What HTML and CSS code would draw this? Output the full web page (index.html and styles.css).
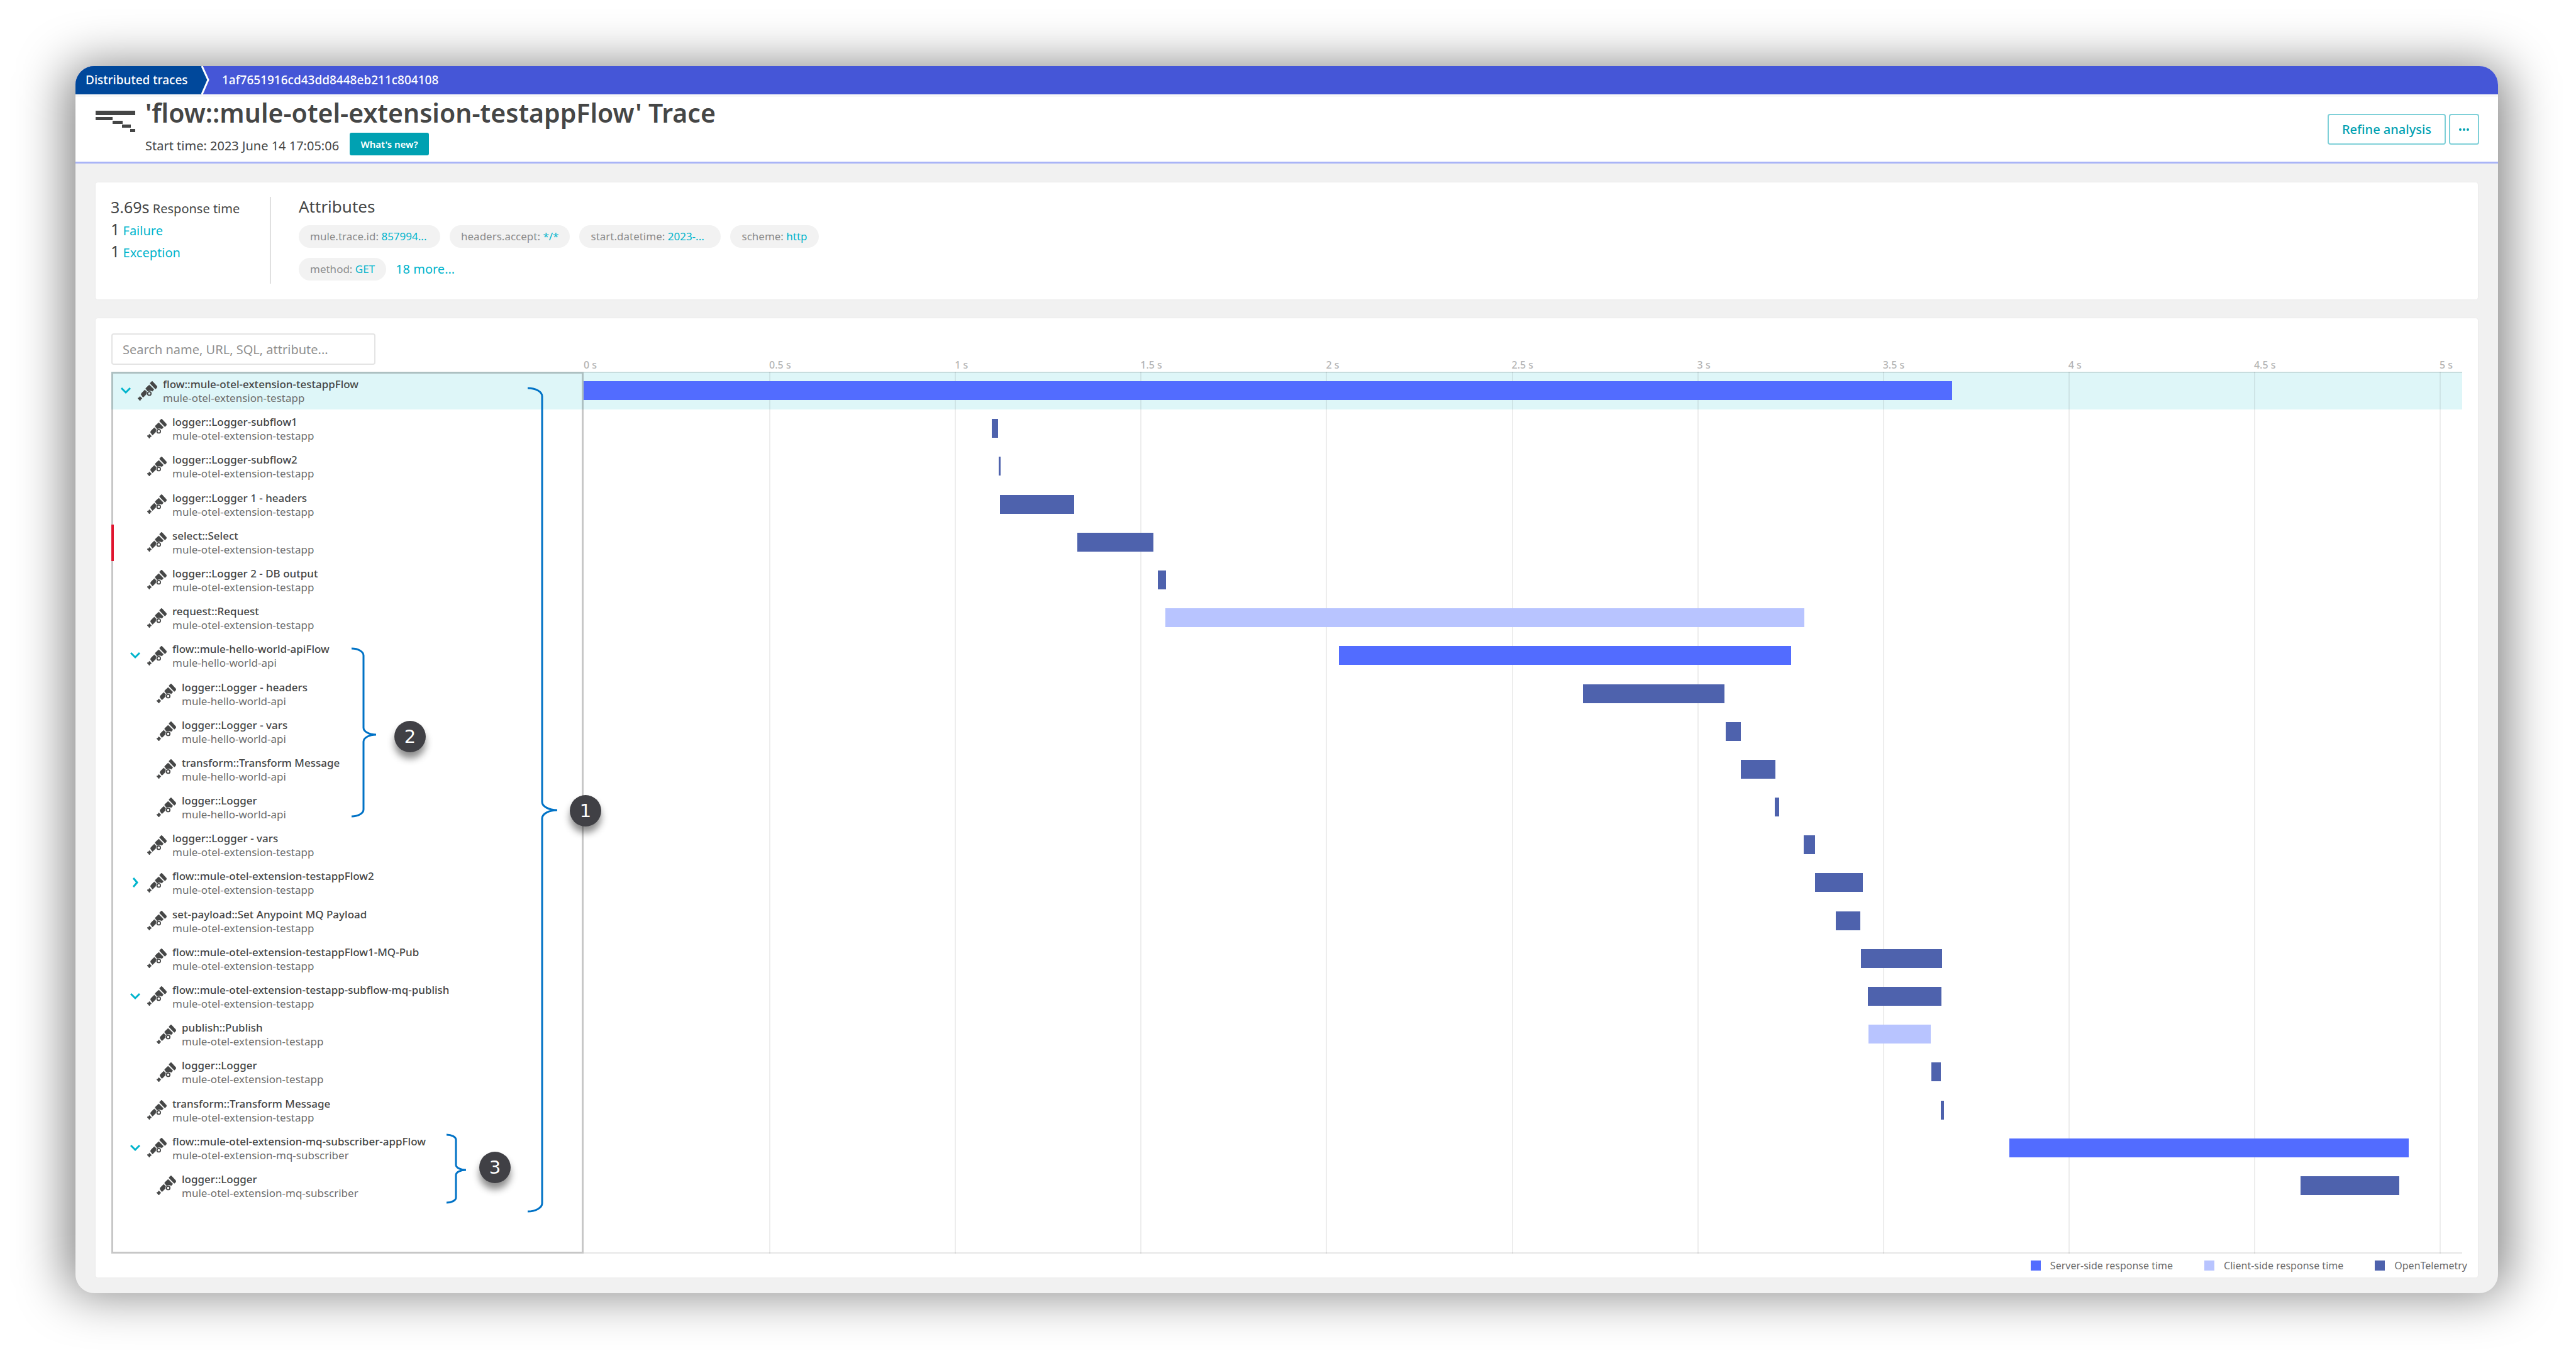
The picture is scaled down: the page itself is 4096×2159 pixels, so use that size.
FILE: index.html
```
<!DOCTYPE html>
<html lang="en">
<head>
<meta charset="utf-8">
<title>Distributed traces</title>
<link rel="stylesheet" href="styles.css">
</head>
<body>
<svg class="sprite" aria-hidden="true">
  <symbol id="telescope" viewBox="0 0 101 101">
    <g stroke="currentColor" stroke-width="2">
    <path d="M65 13 Q64 10 66 8 L72 2 Q74 0 77 2 L100 27 Q102 30 100 32 L94 39 Q92 41 90 39 Z"/>
    <path d="M42 40 Q41 37 43 35 L58 21 Q60 19 62 21 L83 42 Q84 45 81 47 L76 52 Q71 49 66 49 Q58 48 52 52 Z"/>
    <path d="M17 69 L20 62 L35 47 Q37 45 39 47 L47 55 Q44 61 45 67 L30 82 Q28 84 26 82 Z"/>
    <path d="M0 89 Q0 86 3 86 L7 86 L10 80 Q12 78 14 81 L21 88 Q23 91 20 92 L15 94 L14 99 Q12 102 10 100 L7 95 Z"/>
    </g>
    <circle cx="60" cy="64" r="9" fill="none" stroke="currentColor" stroke-width="6"/>
  </symbol>
  <symbol id="chevron-down" viewBox="0 0 16 16">
    <path d="M1 4 L8 11 L15 4" fill="none" stroke="#00b4cc" stroke-width="3"/>
  </symbol>
  <symbol id="chevron-right" viewBox="0 0 16 16">
    <path d="M5 1 L11 8 L5 15" fill="none" stroke="#00b4cc" stroke-width="3"/>
  </symbol>
</svg>

<div class="window">
  <nav class="topbar">
    <a class="crumb" href="#">Distributed traces</a>
    <svg class="crumb-arrow" viewBox="0 0 14 45" aria-hidden="true"><path d="M0 0 H1 L11 22 L1 45 H0 Z" fill="#00489b"/><path d="M1 0 L11 22 L1 45" fill="none" stroke="#fff" stroke-width="3"/></svg>
    <span class="crumb-id">1af7651916cd43dd8448eb211c804108</span>
  </nav>

  <header class="header">
    <svg class="trace-icon" viewBox="0 0 63 34" aria-hidden="true"><path d="M0 0h63v7H0zM0 10h27v5H0zM27 16h16v5H27zM42 22h14v5H42zM55 29h8v5h-8z" fill="#454646"/></svg>
    <div class="heading">
      <h1 class="title">'flow::mule-otel-extension-testappFlow' Trace</h1>
      <div class="meta">
        <span class="start">Start time: 2023 June 14 17:05:06</span>
        <button class="whats-new" type="button">What's new?</button>
      </div>
    </div>
    <div class="actions">
      <button class="action" type="button">Refine analysis</button>
      <button class="action action--more" type="button" aria-label="More"><svg class="dots" viewBox="0 0 16 4" aria-hidden="true"><circle cx="2" cy="2" r="2"/><circle cx="8" cy="2" r="2"/><circle cx="14" cy="2" r="2"/></svg></button>
    </div>
  </header>

  <main class="main">
    <section class="panel summary">
      <div class="stats">
        <div><span class="num">3.69s</span> Response time</div>
        <div><span class="num">1</span> <a href="#">Failure</a></div>
        <div><span class="num">1</span> <a href="#">Exception</a></div>
      </div>
      <div class="attributes">
        <h2 class="attributes-title">Attributes</h2>
        <div class="chips">
          <span class="chip chip--cut">mule.trace.id: <a href="#">857994...</a></span>
          <span class="chip">headers.accept: <a href="#">*/*</a></span>
          <span class="chip chip--cut">start.datetime: <a href="#">2023-...</a></span>
          <span class="chip">scheme: <a href="#">http</a></span>
          <span class="chip">method: <a href="#">GET</a></span>
          <a class="more" href="#">18 more...</a>
        </div>
      </div>
    </section>

    <section class="panel trace">
      <div class="trace-head">
        <div class="search-cell"><input class="search" type="text" aria-label="Search" placeholder="Search name, URL, SQL, attribute..."></div>
        <div class="axis">
          <span>0 s</span><span>0.5 s</span><span>1 s</span><span>1.5 s</span><span>2 s</span><span>2.5 s</span><span>3 s</span><span>3.5 s</span><span>4 s</span><span>4.5 s</span><span>5 s</span>
        </div>
      </div>
      <div class="trace-body">
        <ul class="rows tree">
          <li class="row row--active"><button class="toggle" type="button" aria-label="Collapse"><svg><use href="#chevron-down"/></svg></button><svg class="scope"><use href="#telescope"/></svg><div class="label"><div class="name">flow::mule-otel-extension-testappFlow</div><div class="service">mule-otel-extension-testapp</div></div></li>
          <li class="row level-1"><span class="toggle"></span><svg class="scope"><use href="#telescope"/></svg><div class="label"><div class="name">logger::Logger-subflow1</div><div class="service">mule-otel-extension-testapp</div></div></li>
          <li class="row level-1"><span class="toggle"></span><svg class="scope"><use href="#telescope"/></svg><div class="label"><div class="name">logger::Logger-subflow2</div><div class="service">mule-otel-extension-testapp</div></div></li>
          <li class="row level-1"><span class="toggle"></span><svg class="scope"><use href="#telescope"/></svg><div class="label"><div class="name">logger::Logger 1 - headers</div><div class="service">mule-otel-extension-testapp</div></div></li>
          <li class="row level-1 row--failed"><span class="toggle"></span><svg class="scope"><use href="#telescope"/></svg><div class="label"><div class="name">select::Select</div><div class="service">mule-otel-extension-testapp</div></div></li>
          <li class="row level-1"><span class="toggle"></span><svg class="scope"><use href="#telescope"/></svg><div class="label"><div class="name">logger::Logger 2 - DB output</div><div class="service">mule-otel-extension-testapp</div></div></li>
          <li class="row level-1"><span class="toggle"></span><svg class="scope"><use href="#telescope"/></svg><div class="label"><div class="name">request::Request</div><div class="service">mule-otel-extension-testapp</div></div></li>
          <li class="row level-1"><button class="toggle" type="button" aria-label="Collapse"><svg><use href="#chevron-down"/></svg></button><svg class="scope"><use href="#telescope"/></svg><div class="label"><div class="name">flow::mule-hello-world-apiFlow</div><div class="service">mule-hello-world-api</div></div></li>
          <li class="row level-2"><span class="toggle"></span><svg class="scope"><use href="#telescope"/></svg><div class="label"><div class="name">logger::Logger - headers</div><div class="service">mule-hello-world-api</div></div></li>
          <li class="row level-2"><span class="toggle"></span><svg class="scope"><use href="#telescope"/></svg><div class="label"><div class="name">logger::Logger - vars</div><div class="service">mule-hello-world-api</div></div></li>
          <li class="row level-2"><span class="toggle"></span><svg class="scope"><use href="#telescope"/></svg><div class="label"><div class="name">transform::Transform Message</div><div class="service">mule-hello-world-api</div></div></li>
          <li class="row level-2"><span class="toggle"></span><svg class="scope"><use href="#telescope"/></svg><div class="label"><div class="name">logger::Logger</div><div class="service">mule-hello-world-api</div></div></li>
          <li class="row level-1"><span class="toggle"></span><svg class="scope"><use href="#telescope"/></svg><div class="label"><div class="name">logger::Logger - vars</div><div class="service">mule-otel-extension-testapp</div></div></li>
          <li class="row level-1"><button class="toggle" type="button" aria-label="Expand"><svg><use href="#chevron-right"/></svg></button><svg class="scope"><use href="#telescope"/></svg><div class="label"><div class="name">flow::mule-otel-extension-testappFlow2</div><div class="service">mule-otel-extension-testapp</div></div></li>
          <li class="row level-1"><span class="toggle"></span><svg class="scope"><use href="#telescope"/></svg><div class="label"><div class="name">set-payload::Set Anypoint MQ Payload</div><div class="service">mule-otel-extension-testapp</div></div></li>
          <li class="row level-1"><span class="toggle"></span><svg class="scope"><use href="#telescope"/></svg><div class="label"><div class="name">flow::mule-otel-extension-testappFlow1-MQ-Pub</div><div class="service">mule-otel-extension-testapp</div></div></li>
          <li class="row level-1"><button class="toggle" type="button" aria-label="Collapse"><svg><use href="#chevron-down"/></svg></button><svg class="scope"><use href="#telescope"/></svg><div class="label"><div class="name">flow::mule-otel-extension-testapp-subflow-mq-publish</div><div class="service">mule-otel-extension-testapp</div></div></li>
          <li class="row level-2"><span class="toggle"></span><svg class="scope"><use href="#telescope"/></svg><div class="label"><div class="name">publish::Publish</div><div class="service">mule-otel-extension-testapp</div></div></li>
          <li class="row level-2"><span class="toggle"></span><svg class="scope"><use href="#telescope"/></svg><div class="label"><div class="name">logger::Logger</div><div class="service">mule-otel-extension-testapp</div></div></li>
          <li class="row level-1"><span class="toggle"></span><svg class="scope"><use href="#telescope"/></svg><div class="label"><div class="name">transform::Transform Message</div><div class="service">mule-otel-extension-testapp</div></div></li>
          <li class="row level-1"><button class="toggle" type="button" aria-label="Collapse"><svg><use href="#chevron-down"/></svg></button><svg class="scope"><use href="#telescope"/></svg><div class="label"><div class="name">flow::mule-otel-extension-mq-subscriber-appFlow</div><div class="service">mule-otel-extension-mq-subscriber</div></div></li>
          <li class="row level-2"><span class="toggle"></span><svg class="scope"><use href="#telescope"/></svg><div class="label"><div class="name">logger::Logger</div><div class="service">mule-otel-extension-mq-subscriber</div></div></li>
        </ul>

        <div class="chart">
          <div class="gridlines" aria-hidden="true"><i></i><i></i><i></i><i></i><i></i><i></i><i></i><i></i><i></i><i></i><i></i></div>
          <div class="rows">
            <div class="track row--active"><div class="bar server" style="--from:0;--len:2177"></div></div>
            <div class="track"><div class="bar otel" style="--from:649;--len:10"></div></div>
            <div class="track"><div class="bar otel" style="--from:660;--len:3"></div></div>
            <div class="track"><div class="bar otel" style="--from:662;--len:118"></div></div>
            <div class="track"><div class="bar otel" style="--from:785;--len:121"></div></div>
            <div class="track"><div class="bar otel" style="--from:913;--len:13"></div></div>
            <div class="track"><div class="bar client" style="--from:925;--len:1017"></div></div>
            <div class="track"><div class="bar server" style="--from:1201;--len:720"></div></div>
            <div class="track"><div class="bar otel" style="--from:1590;--len:225"></div></div>
            <div class="track"><div class="bar otel" style="--from:1817;--len:24"></div></div>
            <div class="track"><div class="bar otel" style="--from:1841;--len:55"></div></div>
            <div class="track"><div class="bar otel" style="--from:1895;--len:7"></div></div>
            <div class="track"><div class="bar otel" style="--from:1941;--len:18"></div></div>
            <div class="track"><div class="bar otel" style="--from:1959;--len:76"></div></div>
            <div class="track"><div class="bar otel" style="--from:1992;--len:39"></div></div>
            <div class="track"><div class="bar otel" style="--from:2032;--len:129"></div></div>
            <div class="track"><div class="bar otel" style="--from:2043;--len:117"></div></div>
            <div class="track"><div class="bar client" style="--from:2044;--len:99"></div></div>
            <div class="track"><div class="bar otel" style="--from:2144;--len:15"></div></div>
            <div class="track"><div class="bar otel" style="--from:2159;--len:5"></div></div>
            <div class="track"><div class="bar server" style="--from:2268;--len:635"></div></div>
            <div class="track"><div class="bar otel" style="--from:2731;--len:157"></div></div>
          </div>
        </div>

        <svg class="braces" viewBox="0 0 760 1400" aria-hidden="true">
          <path d="M662 26 A23 13 0 0 1 685 39 V684 A24 13 0 0 0 709 697 A24 13 0 0 0 685 710 V1322 A23 13 0 0 1 662 1335"/>
          <path d="M382 440 A19 11 0 0 1 401 451 V566 A20 11 0 0 0 421 577 A20 11 0 0 0 401 588 V696 A19 11 0 0 1 382 707"/>
          <path d="M533 1213 A15 8 0 0 1 548 1221 V1261 A16 8 0 0 0 564 1269 A16 8 0 0 0 548 1277 V1313 A15 8 0 0 1 533 1321"/>
        </svg>
        <span class="callout callout-1">1</span>
        <span class="callout callout-2">2</span>
        <span class="callout callout-3">3</span>
      </div>
      <div class="legend">
        <span class="legend-item"><i class="swatch server"></i>Server-side response time</span>
        <span class="legend-item"><i class="swatch client"></i>Client-side response time</span>
        <span class="legend-item"><i class="swatch otel"></i>OpenTelemetry</span>
      </div>
    </section>
  </main>
</div>
</body>
</html>
```
FILE: styles.css
```
* { box-sizing: border-box; }

body {
  margin: 0;
  padding: 105px 124px 103px 120px;
  background: #fff;
  color: #454646;
  font: 400 20px/28px "Noto Sans", sans-serif;
}

a { color: #00b4cc; text-decoration: none; }
button, input { font: inherit; }
.sprite { position: absolute; width: 0; height: 0; }

/* Window frame with its wide soft shadow */
.window {
  position: relative;
  background: #f1f1f1;
  border-radius: 30px;
}
.window::before {
  content: "";
  position: absolute;
  inset: 0 -13px;
  z-index: -1;
  border-radius: 30px;
  background: rgba(0, 0, 0, .5);
  filter: blur(40px);
}

/* Breadcrumb bar */
.topbar {
  display: flex;
  height: 45px;
  border-radius: 30px 30px 0 0;
  background: #4556d7;
  color: #fff;
  font-weight: 500;
  font-size: 19px;
  line-height: 45px;
  overflow: hidden;
}
.crumb {
  width: 200px;
  padding-left: 16px;
  background: #00489b;
  color: #fff;
}
.crumb-arrow { width: 14px; height: 45px; margin-right: 19px; }

/* Page header */
.header {
  display: flex;
  gap: 16px;
  padding: 4px 30px 10px 32px;
  background: #fff;
  border-bottom: 3px solid #a9b4f7;
  box-shadow: inset 0 4px #f8f8f8;
}
.trace-icon { width: 63px; height: 34px; margin-top: 22px; }
.heading { flex: 1; }
.title { margin: 0 0 7px; font-size: 41px; line-height: 50px; font-weight: 600; }
.meta { display: flex; align-items: center; gap: 17px; height: 36px; }
.start { padding-top: 5px; }
.whats-new {
  width: 126px;
  height: 36px;
  padding: 0;
  border: 0;
  border-radius: 3px;
  background: #00a1b2;
  color: #fff;
  font-size: 15px;
  font-weight: 600;
}
.actions { display: flex; gap: 5px; padding-top: 27px; }
.action {
  width: 188px;
  height: 49px;
  padding: 0;
  border: 2px solid #7fd0d8;
  border-radius: 4px;
  background: #fff;
  color: #00a1b2;
  font-weight: 500;
}
.action--more { width: 48px; }
.dots { display: block; width: 16px; height: 4px; margin: auto; fill: #00a1b2; }

/* Panels */
.main { display: grid; gap: 30px; padding: 30px 32px 25px; }
.panel { background: #fff; border-radius: 4px; box-shadow: 0 0 1px 1px #ececec; }

.summary { display: flex; padding: 21px 25px 25px 24px; }
.stats {
  width: 255px;
  min-height: 140px;
  padding-top: 3px;
  line-height: 35px;
  background: linear-gradient(#e0e0e0, #e0e0e0) right bottom / 2px 138px no-repeat;
}
.num { font-size: 25px; line-height: 25px; }
.attributes { padding-left: 44px; }
.attributes-title { margin: 0 0 12px; font-size: 26px; line-height: 35px; font-weight: 400; }
.chips { display: flex; flex-wrap: wrap; gap: 16px 15px; max-width: 860px; }
.chip {
  padding: 0 18px;
  border-radius: 18px;
  background: #f2f2f2;
  color: #8c8c8c;
  font-size: 17px;
  line-height: 36px;
  white-space: nowrap;
}
.chip--cut { width: 225px; }
.more { line-height: 36px; }

/* Trace waterfall */
.trace { padding-top: 24px; }
.trace-head, .trace-body {
  display: grid;
  grid-template-columns: 751px 1fr;
  margin: 0 25px;
}
.trace-head { height: 60px; }
.search {
  width: 420px;
  height: 50px;
  padding: 0 16px;
  border: 2px solid #e4e4e4;
  border-radius: 4px;
  color: #454646;
}
.search::placeholder { color: #8f8f8f; }
.axis, .gridlines { display: grid; grid-template-columns: repeat(10, 2952fr) 360fr; }
.axis {
  align-items: end;
  padding-bottom: 1px;
  color: #b4b4b4;
  font-size: 16px;
  font-weight: 500;
  line-height: 18px;
  white-space: nowrap;
}
.trace-body { position: relative; padding-top: 1px; }
.rows {
  display: grid;
  grid-template-rows: repeat(22, 1fr);
  min-height: 1324px;
  margin: 0;
  padding: 0;
  list-style: none;
}
.tree, .chart { padding-bottom: 78px; }
.tree { position: relative; min-height: 1402px; }
.tree::after {
  content: "";
  position: absolute;
  inset: 0;
  border: 3px solid rgba(0, 0, 0, .22);
  pointer-events: none;
}
.row { display: flex; align-items: center; padding-left: 15px; }
.level-1 { padding-left: 30px; }
.level-2 { padding-left: 45px; }
.row--active { background: #def6f8; }
.row--failed { position: relative; }
.row--failed::before {
  content: "";
  position: absolute;
  inset: 2px auto 0 0;
  z-index: 1;
  width: 4px;
  background: #e0152f;
}
.toggle { width: 16px; height: 16px; margin-right: 11px; padding: 0; border: 0; background: none; }
.toggle svg { display: block; width: 16px; height: 16px; }
.scope { width: 31px; height: 31px; margin-right: 9px; color: #454646; fill: currentColor; }
.label { padding-top: 2px; font-size: 17px; line-height: 22px; }
.name { font-weight: 500; }
.service { color: #6d6d6d; }

.chart {
  position: relative;
  box-shadow: inset 0 -2px #e6e6e6;
}
.chart::after {
  content: "";
  position: absolute;
  inset: 0 0 auto 0;
  height: 2px;
  background: rgba(0, 0, 0, .1);
}
.gridlines { position: absolute; inset: 0; }
.gridlines i + i { border-left: 2px solid rgba(0, 0, 0, .07); }
.track { display: flex; align-items: center; }
.bar {
  position: relative;
  height: 30px;
  margin-left: calc(var(--from) / 2988 * 100%);
  width: calc(var(--len) / 2988 * 100%);
}
.server { background: #526cff; }
.client { background: #b8c4ff; }
.otel { background: #4e62ad; }

/* Numbered callouts drawn over the trace */
.braces {
  position: absolute;
  left: 0;
  top: 1px;
  width: 760px;
  height: 1400px;
  fill: none;
  stroke: #0072c6;
  stroke-width: 3;
}
.callout {
  position: absolute;
  width: 50px;
  height: 50px;
  border-radius: 50%;
  background: #404045;
  box-shadow: 0 10px 12px rgba(0, 0, 0, .45);
  color: #fff;
  font: 29px/50px "DejaVu Sans", sans-serif;
  text-align: center;
}
.callout-1 { left: 729px; top: 674px; }
.callout-2 { left: 450px; top: 556px; }
.callout-3 { left: 585px; top: 1241px; }

.legend {
  display: flex;
  justify-content: flex-end;
  gap: 50px;
  padding-right: 17px;
  font-size: 16px;
  line-height: 38px;
  color: #6d6d6d;
}
.legend-item { display: flex; align-items: center; gap: 15px; }
.swatch { width: 16px; height: 16px; }
```
